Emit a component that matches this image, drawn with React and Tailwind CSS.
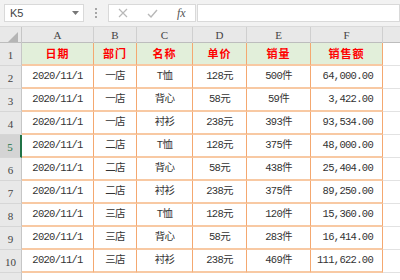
import React from 'react'

const cols = ['A', 'B', 'C', 'D', 'E', 'F']
const heads = ['日期', '部门', '名称', '单价', '销量', '销售额']

const rows = [
  ['2020/11/1', '一店', 'T恤', '128元', '500件', '64,000.00'],
  ['2020/11/1', '一店', '背心', '58元', '59件', '3,422.00'],
  ['2020/11/1', '一店', '衬衫', '238元', '393件', '93,534.00'],
  ['2020/11/1', '二店', 'T恤', '128元', '375件', '48,000.00'],
  ['2020/11/1', '二店', '背心', '58元', '438件', '25,404.00'],
  ['2020/11/1', '二店', '衬衫', '238元', '375件', '89,250.00'],
  ['2020/11/1', '三店', 'T恤', '128元', '120件', '15,360.00'],
  ['2020/11/1', '三店', '背心', '58元', '283件', '16,414.00'],
  ['2020/11/1', '三店', '衬衫', '238元', '469件', '111,622.00']
]

const gridCols = 'grid grid-cols-[22px_72px_43px_56px_54px_64px_72px_1fr]'
const cjk = "font-['Liberation_Mono','Noto_Sans_CJK_SC',monospace]"
const serif = "font-['Liberation_Serif',serif]"

const App = () => {
  return (
    <div className="w-[400px] h-[280px] overflow-hidden bg-white text-[#333]">
      {/* 编辑栏 */}
      <div className="h-[27px] bg-[#f2f2f2] border-b border-[#dadada] flex items-center">
        <div className="ml-[4px] w-[80px] h-[18px] bg-white border border-[#d9d9d9] flex items-center justify-between pl-[5px] pr-[4px]">
          <span className="text-[11px] font-['Liberation_Sans',sans-serif] text-[#444]">K5</span>
          <svg width="7" height="4" viewBox="0 0 7 4"><path d="M0 0h7L3.5 4z" fill="#777" /></svg>
        </div>
        <div className="w-[24px] flex flex-col items-center gap-[2px]">
          <div className="w-[2px] h-[2px] bg-[#a6a6a6]" />
          <div className="w-[2px] h-[2px] bg-[#a6a6a6]" />
          <div className="w-[2px] h-[2px] bg-[#a6a6a6]" />
        </div>
        <div className="w-[88px] h-[18px] bg-white border border-[#d9d9d9] flex items-center">
          <svg className="ml-[9px]" width="10" height="10" viewBox="0 0 10 10">
            <path d="M1 1L9 9M9 1L1 9" stroke="#b8b8b8" strokeWidth="1.2" />
          </svg>
          <svg className="ml-[19px]" width="11" height="9" viewBox="0 0 11 9">
            <path d="M1 5l3 3 6-7" stroke="#b8b8b8" strokeWidth="1.4" fill="none" />
          </svg>
          <span className={`ml-[19px] text-[12px] italic text-[#555] ${serif}`}>fx</span>
        </div>
        <div className="flex-1 h-[18px] bg-white border border-[#d9d9d9] ml-[1px]" />
      </div>

      {/* 列标题 */}
      <div className={`${gridCols} h-[16px] bg-[#e8e8e8] border-b border-[#bdbdbd]`}>
        <div className="relative border-r border-[#c6c6c6]">
          <svg className="absolute right-[3px] bottom-[2px]" width="10" height="10" viewBox="0 0 10 10">
            <path d="M10 0V10H0z" fill="#b5b5b5" />
          </svg>
        </div>
        {cols.map((c) => (
          <div key={c} className={`flex items-center justify-center border-r border-[#cfcfcf] text-[11px] text-[#444] ${serif}`}>
            {c}
          </div>
        ))}
        <div />
      </div>

      {/* 表头 */}
      <div className={`${gridCols} h-[23px]`}>
        <div className={`flex items-end justify-center pb-[2px] bg-[#e8e8e8] border-r border-[#c6c6c6] border-b border-b-[#d6d6d6] text-[11px] text-[#444] ${serif}`}>
          1
        </div>
        {heads.map((h) => (
          <div key={h} className="flex items-center justify-center bg-[#e2efda] border-r border-[#f4a870] border-b-2 border-b-[#f8c9a3] text-[11px] font-bold text-[#ff0000] font-['Noto_Sans_CJK_SC',sans-serif] tracking-[1px]">
            {h}
          </div>
        ))}
        <div className="border-b border-[#e2e2e2]" />
      </div>

      {/* 数据 */}
      {rows.map((r, i) => {
        const sel = i + 2 === 5
        return (
          <div key={i} className={`${gridCols} h-[23px]`}>
            <div
              className={`flex items-end justify-center pb-[2px] border-b border-b-[#d6d6d6] text-[11px] ${serif} ${
                sel
                  ? 'bg-[#d4d4d4] border-r-2 border-[#217346] text-[#217346]'
                  : 'bg-[#e8e8e8] border-r border-[#c6c6c6] text-[#444]'
              }`}
            >
              {i + 2}
            </div>
            {r.map((v, j) => (
              <div
                key={j}
                className={`flex items-center border-r border-[#f4a870] border-b-2 border-b-[#f8c9a3] text-[10.5px] tracking-[-0.7px] ${cjk} ${
                  j === 5 ? 'justify-end pr-[9px]' : 'justify-center'
                }`}
              >
                {v}
              </div>
            ))}
            <div className="border-b border-[#e2e2e2]" />
          </div>
        )
      })}

      {/* 第11行 */}
      <div className={`${gridCols} h-[23px]`}>
        <div className="bg-[#e8e8e8] border-r border-[#c6c6c6]" />
      </div>
    </div>
  )
}

export default App
